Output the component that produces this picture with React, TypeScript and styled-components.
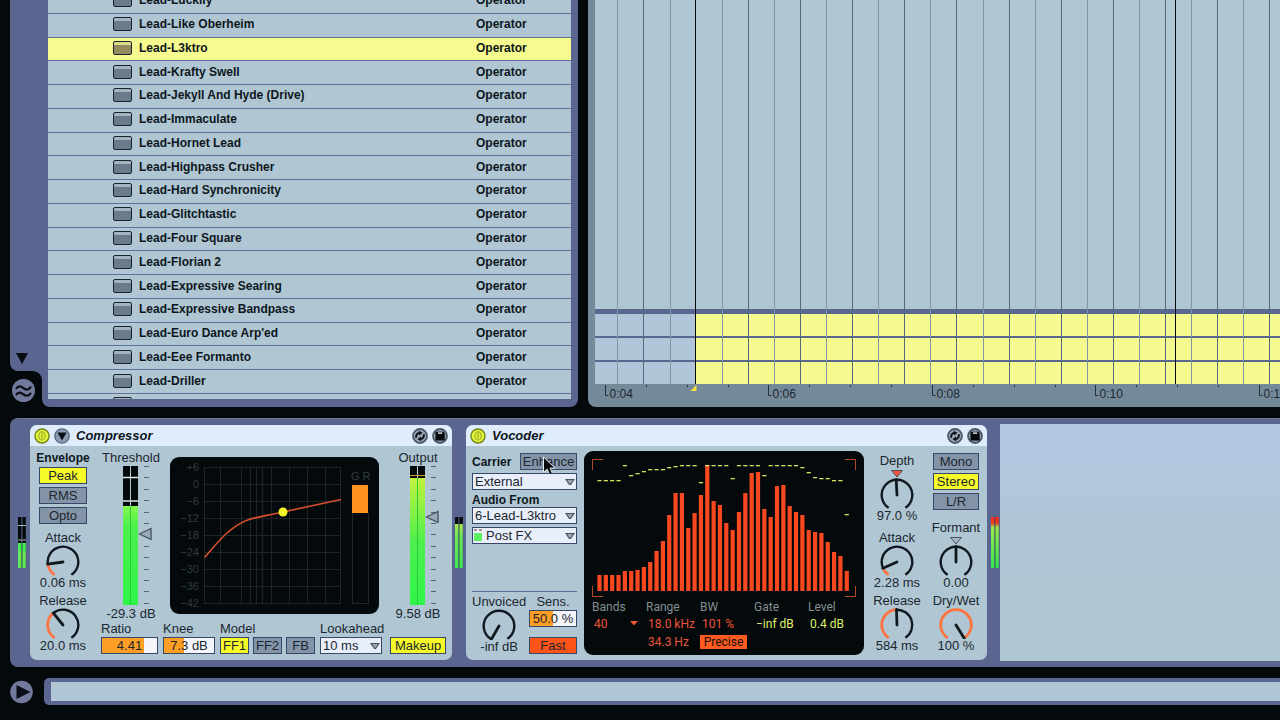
import React from "react";
import styled, { createGlobalStyle, css } from "styled-components";

const c = {
  black: "#04090b",
  frame: "#5a668f",
  pale: "#b0c6d2",
  paleBlue: "#b0c5d8",
  line: "#62719a",
  yellow: "#f7fa8e",
  lit: "#f6fb28",
  off: "#8494a8",
  ink: "#1b2630",
  orange: "#ff9e25",
  hot: "#ff5418",
  ring: "#ff7440",
};

const Global = createGlobalStyle`
  * { box-sizing: border-box; }
  html, body { margin: 0; background: ${c.black}; }
  body, button, input, select { font-family: "Liberation Sans", Arial, sans-serif; }
`;

const Page = styled.main`
  min-height: 100vh;
  display: grid;
  grid-template-rows: 1fr auto auto;
  gap: 11px;
  padding-bottom: 15px;
  background: ${c.black};
  color: ${c.ink};
  font-size: 13px;
  line-height: 14px;
  overflow: hidden;
`;

/* ---------- upper half ---------- */

const Upper = styled.div`
  display: flex;
  gap: 10px;
  padding-left: 10px;
  min-width: 0;
`;

const Browser = styled.section`
  display: flex;
  flex: 0 0 568px;
`;

const SideRail = styled.div`
  width: 32px;
  display: flex;
  flex-direction: column;
`;

const SideStrip = styled.div`
  flex: 1;
  display: flex;
  align-items: flex-end;
  background: ${c.frame};
  border-bottom-left-radius: 8px;
  padding: 0 0 7px 6px;
`;

const SideCorner = styled.div`
  background: ${c.frame};
`;

const SideFoot = styled.div`
  height: 36px;
  background: ${c.black};
  border-top-right-radius: 9px;
  display: flex;
  align-items: center;
  padding: 3px 0 0 1px;
`;

const PlainButton = styled.button`
  display: flex;
  padding: 0;
  border: 0;
  background: none;
  cursor: pointer;
`;

const BrowserPanel = styled.div`
  flex: 1;
  display: flex;
  padding: 0 7px 8px 6px;
  background: ${c.frame};
  border-radius: 0 0 8px 8px;
`;

const ListClip = styled.div`
  flex: 1;
  display: flex;
  overflow: hidden;
  background: ${c.pale};
`;

const Presets = styled.table`
  flex: 1;
  display: flex;
  margin-top: -10px;
  font-size: 12px;
  font-weight: bold;
  color: #0d161d;
`;

const PresetRows = styled.tbody`
  flex: 1;
  display: grid;
  grid-template-rows: repeat(17, minmax(23px, 1fr)) 5px;
`;

const PresetRow = styled.tr<{ $on?: boolean; $cut?: boolean }>`
  display: grid;
  grid-template-columns: 26px 337px 1fr;
  align-items: ${(p) => (p.$cut ? "start" : "center")};
  padding: ${(p) => (p.$cut ? "3px 0 0 65px" : "0 0 2px 65px")};
  overflow: hidden;
  background: ${(p) => (p.$on ? c.yellow : c.pale)};
  border-bottom: ${(p) => (p.$cut ? "0" : `1px solid ${c.line}`)};
`;

const Cell = styled.td`
  display: block;
  padding: 0;
  white-space: nowrap;
`;

const PresetIcon = styled.span<{ $on?: boolean }>`
  display: block;
  width: 19px;
  height: 14px;
  border: 1px solid #17222c;
  border-radius: 2px;
  background: ${(p) =>
    p.$on
      ? "linear-gradient(#d9dc84 0 3px, #948c60 3px)"
      : "linear-gradient(#a3b4c0 0 3px, #6a7c8b 3px)"};
`;

const Arrangement = styled.section`
  flex: 1;
  min-width: 0;
  display: flex;
  flex-direction: column;
  padding-left: 7px;
  background: #758a99;
  border-bottom-left-radius: 8px;
`;

const Tracks = styled.div`
  position: relative;
  flex: 1;
  display: flex;
  flex-direction: column;
  overflow: hidden;
`;

const OpenTrack = styled.div`
  flex: 1;
  background: ${c.pale};
  border-bottom: 5px solid ${c.frame};
`;

const Lane = styled.div`
  height: 22px;
  display: flex;
  background: ${c.paleBlue};

  & + & {
    height: 24px;
    border-top: 2px solid ${c.frame};
  }
`;

const LaneGap = styled.div`
  width: 100px;
`;

const LaneClip = styled.div`
  flex: 1;
  background: #f5fa90;
`;

const GridOverlay = styled.svg`
  position: absolute;
  inset: 0;
  width: 100%;
  height: 100%;
`;

const Ruler = styled.svg`
  display: block;
  width: 100%;
  height: 23px;
  font-size: 12px;
`;

/* ---------- device rail ---------- */

const Rail = styled.section`
  display: flex;
  margin-left: 10px;
  padding: 5px 0 6px;
  background: ${c.frame};
  border-top: 1px solid #6a769a;
  border-radius: 8px 0 0 8px;
  overflow: hidden;
`;

const RailGap = styled.div<{ $w: number; $inset?: number }>`
  flex: 0 0 ${(p) => p.$w}px;
  display: flex;
  align-items: center;
  justify-content: center;
  padding-left: ${(p) => p.$inset ?? 0}px;
`;

const DropZone = styled.div`
  flex: 1;
  background: linear-gradient(#b3c6e2, ${c.pale} 70%);
`;

const Device = styled.article<{ $w: number }>`
  flex: 0 0 ${(p) => p.$w}px;
  margin: 1px 0;
  border-radius: 7px;
  overflow: hidden;
  background: ${c.pale};
`;

const DeviceHeader = styled.header`
  height: 21px;
  display: flex;
  align-items: center;
  gap: 4px;
  padding: 0 4px;
  background: #dfecfb;
`;

const DeviceTitle = styled.h2`
  flex: 1;
  margin: 0 0 0 2px;
  font-size: 13px;
  line-height: 16px;
  font-style: italic;
  font-weight: bold;
  color: #0d161d;
`;

const DeviceBody = styled.div`
  display: flex;
  height: 214px;
`;

const Column = styled.div<{ $w?: number; $gap?: number; $top?: number }>`
  ${(p) => p.$w && css`flex: 0 0 ${p.$w}px;`}
  display: flex;
  flex-direction: column;
  align-items: center;
  gap: ${(p) => p.$gap ?? 0}px;
  padding-top: ${(p) => p.$top ?? 0}px;
`;

const Heading = styled.span`
  font-size: 12px;
  font-weight: bold;
  color: #0d161d;
`;

const Toggle = styled.button<{ $w: number; $tone?: "lit" | "hot" }>`
  width: ${(p) => p.$w}px;
  height: 17px;
  padding: 0;
  border: 1px solid #36476a;
  font-size: 13px;
  line-height: 14px;
  text-align: center;
  white-space: nowrap;
  color: ${c.ink};
  background: ${(p) => (p.$tone === "lit" ? c.lit : p.$tone === "hot" ? c.hot : c.off)};
`;

const ToggleStack = styled.div`
  display: flex;
  flex-direction: column;
  gap: 3px;
`;

const ToggleRow = styled.div`
  display: flex;
  gap: 4px;
`;

const KnobBox = styled.div`
  display: flex;
  flex-direction: column;
  align-items: center;
  white-space: nowrap;

  svg {
    display: block;
  }
`;

const Field = styled.label<{ $w?: number }>`
  display: flex;
  flex-direction: column;
  gap: 1px;
  white-space: nowrap;
  ${(p) => p.$w && css`width: ${p.$w}px;`}
`;

const FieldSet = styled.div`
  display: flex;
  flex-direction: column;
  gap: 1px;
`;

const ValueInput = styled.input`
  width: 100%;
  height: 17px;
  padding: 0;
  border: 1px solid #36476a;
  border-radius: 0;
  font-size: 13px;
  line-height: 14px;
  text-align: center;
  color: ${c.ink};
`;

const SelectBox = styled.span`
  position: relative;
  display: block;

  svg {
    position: absolute;
    pointer-events: none;
  }
`;

const Picker = styled.select<{ $indent?: number }>`
  appearance: none;
  display: block;
  width: 100%;
  height: 17px;
  padding: 0 0 0 ${(p) => p.$indent ?? 2}px;
  border: 1px solid #36476a;
  border-radius: 0;
  background: #e9effa;
  font-size: 13px;
  line-height: 14px;
  color: ${c.ink};
`;

const SelectArrow = styled.svg`
  right: 2px;
  top: 5px;
`;

const SourceLight = styled.svg`
  left: 2px;
  top: 2px;
`;

const Main = styled.div`
  flex: 1;
  display: flex;
  flex-direction: column;
  justify-content: space-between;
  padding: 5px 3px 6px 5px;
`;

const MeterRow = styled.div`
  display: flex;
  gap: 9px;
`;

const MeterColumn = styled.div`
  width: 60px;
  display: flex;
  flex-direction: column;
  align-items: center;
  white-space: nowrap;

  svg {
    display: block;
    margin: 1px 0 2px;
  }
`;

const Screen = styled.div`
  background: ${c.black};
  border-radius: 9px;
  overflow: hidden;
`;

const CurveScreen = styled(Screen)`
  width: 209px;
  height: 157px;
  margin-top: 6px;

  svg {
    display: block;
  }
`;

const ParamRow = styled.div`
  display: flex;
  align-items: flex-end;
  gap: 5px;
  padding-right: 3px;

  > :last-child {
    margin-left: auto;
  }
`;

const Sources = styled.div`
  width: 118px;
  display: flex;
  flex-direction: column;
  padding: 7px 7px 6px 6px;
`;

const CarrierRow = styled.div`
  display: flex;
  justify-content: space-between;
  align-items: center;
  margin-bottom: 3px;
`;

const SourceGroup = styled.div`
  display: flex;
  flex-direction: column;
  margin-top: 3px;

  > span + span + span {
    margin-top: 3px;
  }
`;

const VoiceRow = styled.div`
  display: flex;
  justify-content: space-between;
  margin-top: auto;
  border-top: 1px solid #60719a;
  padding-top: 3px;
`;

const VoiceColumn = styled.div`
  display: flex;
  flex-direction: column;
  align-items: center;
  justify-content: space-between;
`;

const BandScreen = styled(Screen)`
  width: 280px;
  height: 204px;
  margin-top: 5px;
  font-family: Roboto, "Liberation Sans", sans-serif;
  font-size: 12px;

  > svg {
    display: block;
  }
`;

const Readouts = styled.div`
  display: grid;
  grid-template-columns: repeat(5, 54px);
  grid-template-rows: 16px 17px 19px;
  align-items: center;
  padding-left: 8px;
  white-space: nowrap;
  color: #848f92;
`;

const Readout = styled.span<{ $tone?: "hot" | "lit" }>`
  padding-left: 2px;
  display: flex;
  align-items: center;
  gap: 22px;
  color: ${(p) => (p.$tone === "lit" ? "#dff06c" : "#ee5638")};
`;

const Precise = styled.button`
  width: 47px;
  height: 14px;
  padding: 0;
  border: 0;
  background: #ff5a20;
  font-family: inherit;
  font-size: 12px;
  line-height: 14px;
  color: #1a0d08;
`;

const Knobs = styled.div`
  display: flex;
  gap: 3px;
  padding-left: 5px;
`;

const MousePointer = styled.svg`
  position: absolute;
  left: 22px;
  top: 3px;
  pointer-events: none;
`;

const PointerHost = styled.span`
  position: relative;
  display: flex;
`;

/* ---------- status bar ---------- */

const StatusRow = styled.footer`
  display: flex;
  align-items: center;
  gap: 11px;
  padding-left: 10px;
`;

const StatusBar = styled.div`
  flex: 1;
  height: 27px;
  padding: 4px 0 4px 7px;
  background: ${c.frame};
  border-radius: 5px 0 0 5px;
`;

const StatusText = styled.div`
  height: 100%;
  background: #b1c6d4;
`;

/* ---------- drawings ---------- */

const at = (cx: number, cy: number, r: number, deg: number) => {
  const a = (deg * Math.PI) / 180;
  return `${(cx + r * Math.sin(a)).toFixed(2)} ${(cy - r * Math.cos(a)).toFixed(2)}`;
};

const arc = (cx: number, cy: number, r: number, from: number, to: number) =>
  `M${at(cx, cy, r, from)} A${r} ${r} 0 ${to - from > 180 ? 1 : 0} 1 ${at(cx, cy, r, to)}`;

type KnobProps = { label: string; value: string; angle: number; filled?: boolean; marker?: string };

function Knob({ label, value, angle, filled, marker }: KnobProps) {
  const h = marker ? 41 : 31;
  const cy = h - 14;
  const end = Math.min(angle, 147);
  return (
    <KnobBox role="slider" aria-label={label} aria-valuetext={value} aria-valuenow={angle}>
      <span>{label}</span>
      <svg width="38" height={h} fill="none" strokeWidth="2.4">
        {marker && (
          <path d="M13.5 2.5h11L19 9z" fill={marker} stroke="#46545f" strokeWidth="1" />
        )}
        <path d={arc(19, cy, 15.3, filled ? end : -147, 147)} stroke="#10191f" />
        {filled && <path d={arc(19, cy, 15.3, -147, end)} stroke={c.ring} strokeWidth="2.8" />}
        <path
          d={`M19 ${cy}L${at(19, cy, 15.5, angle)}`}
          stroke="#10191f"
          strokeWidth="2.8"
          strokeLinecap="round"
        />
      </svg>
      <span>{value}</span>
    </KnobBox>
  );
}

function LevelMeter({ kind, top, handle }: { kind: "in" | "out"; top: number; handle: number }) {
  const id = `level-${kind}`;
  return (
    <svg width="60" height="139">
      <defs>
        <linearGradient id={id} x1="0" y1="0" x2="0" y2="1">
          <stop offset="0" stopColor={kind === "out" ? "#c2f23c" : "#84f84c"} />
          <stop offset={kind === "out" ? "0.5" : "0.2"} stopColor="#4df04c" />
          <stop offset="1" stopColor="#2ff548" />
        </linearGradient>
      </defs>
      <path d="M22 0h7v139h-7zM30 0h7v139h-7z" fill={c.black} />
      <rect x="22" y={top} width="15" height={139 - top} fill={`url(#${id})`} />
      <path d={`M29.5 ${top}V139`} stroke="#2cc940" strokeWidth="1" />
      {kind === "in" ? (
        <path d="M22 11.5h15M22 35h15" stroke="#dfe8ea" strokeWidth="1.5" />
      ) : (
        <path d="M22 9.5h15" stroke="#d6a028" strokeWidth="1.2" />
      )}
      {Array.from({ length: 13 }, (_, i) => (
        <path key={i} d={`M43 ${0.5 + Math.round(i * 11.4)}h5`} stroke="#56646f" />
      ))}
      <path
        d={`M38.5 ${handle}L50 ${handle - 5.5}v11z`}
        fill="#9aabb8"
        stroke="#44525d"
        strokeWidth="1.3"
      />
    </svg>
  );
}

function TinyMeter({ kind }: { kind: "low" | "mid" | "hot" }) {
  const top = kind === "low" ? 26 : kind === "mid" ? 7 : 0;
  const id = `tiny-${kind}`;
  return (
    <svg width="8" height="51">
      <defs>
        <linearGradient id={id} x1="0" y1="0" x2="0" y2="1">
          <stop offset="0" stopColor={kind === "hot" ? "#ff2a18" : kind === "mid" ? "#a8e84c" : "#3ef050"} />
          <stop offset="0.12" stopColor={kind === "hot" ? "#f04028" : kind === "mid" ? "#90e850" : "#3ef050"} />
          <stop offset="0.2" stopColor={kind === "hot" ? "#9ae850" : "#70e858"} />
          <stop offset="1" stopColor="#34e858" />
        </linearGradient>
      </defs>
      <path d="M0 0h3.4v51H0zM4.4 0h3.4v51H4.4z" fill={c.black} />
      <path d={`M0 ${top}h3.4v51H0zM4.4 ${top}h3.4v51H4.4z`} fill={`url(#${id})`} />
      {kind === "low" && <path d="M0 8.5h8M0 23h8" stroke="#9db8b0" />}
    </svg>
  );
}

const PowerIcon = () => (
  <svg width="16" height="16" fill="none">
    <circle cx="8" cy="8" r="7" fill="#e6f53a" stroke="#6f8a1e" strokeWidth="1.5" />
    <ellipse cx="8" cy="8" rx="3.2" ry="4.2" stroke="#a2b428" strokeWidth="1.3" />
    <path d="M8 5.5v5" stroke="#8ea024" strokeWidth="1.3" />
  </svg>
);

const FoldIcon = () => (
  <svg width="16" height="16">
    <circle cx="8" cy="8" r="7.2" fill="#8b9bb4" stroke="#56667c" strokeWidth="1.3" />
    <path d="M3.4 4.6h9.2L8 12.6z" fill="#0a1016" />
  </svg>
);

const SwapIcon = () => (
  <svg width="16" height="16" fill="none">
    <circle cx="8" cy="8" r="7" fill="#98a6b6" stroke="#4c5966" strokeWidth="1.8" />
    <path d="M4.300 9.800C3.600 7.400 5 5.400 7 4.900M11.700 6.200c.7 2.400-.7 4.400-2.700 4.900" stroke="#0a1016" strokeWidth="2" />
    <path d="M6.800 2.800l3.700 2-3.300 2.700zM9.200 13.200l-3.700-2 3.300-2.700z" fill="#0a1016" />
  </svg>
);

const DiskIcon = () => (
  <svg width="16" height="16">
    <circle cx="8" cy="8" r="7" fill="#8d9bab" stroke="#4c5966" strokeWidth="1.8" />
    <path d="M3.500 3.800h8l1.200 1.200v7.500H3.500z" fill="#05090c" />
    <path d="M6 4.200h4.200v1.800H6z" fill="#b8c5d2" />
  </svg>
);

const WaveIcon = () => (
  <svg width="25" height="25" fill="none">
    <circle cx="12.5" cy="12.5" r="11.5" fill="#717a9d" />
    <path
      d="M5 10.800c2.500-3.600 5-2.600 7.500-.6s5 2 7.500-1.600M5 17c2.500-3.600 5-2.600 7.500-.6s5 2 7.500-1.600"
      stroke="#0a0f18"
      strokeWidth="2.2"
    />
  </svg>
);

const PlayIcon = () => (
  <svg width="23" height="24">
    <circle cx="11.5" cy="12" r="11.300" fill="#717a9d" />
    <path d="M6.500 5v14l14-7z" fill="#0a0f18" />
  </svg>
);

const DropArrow = () => (
  <SelectArrow width="10" height="8">
    <path d="M1 1.500h8L5.600 6.500H4.400z" fill="#98a6b0" stroke="#46525c" strokeWidth="1.2" />
  </SelectArrow>
);

function TimeGrid() {
  const lines = Array.from({ length: 80 }, (_, i) => Math.round(22.4 + i * 26.08) + 0.5);
  return (
    <GridOverlay aria-hidden="true">
      {lines.map((x, i) =>
        i === 3 ? null : (
          <line key={x} x1={x} x2={x} y1="0" y2="100%" stroke={i % 2 ? "#55677c" : "#8196a8"} />
        )
      )}
      <line x1="100.500" x2="100.500" y1="0" y2="100%" stroke="#05090c" />
      <line x1="580.500" x2="580.500" y1="0" y2="100%" stroke="#05090c" />
    </GridOverlay>
  );
}

function TimeRuler() {
  const marks = ["0:04", "0:06", "0:08", "0:10", "0:12", "0:14", "0:16", "0:18"];
  return (
    <Ruler>
      {marks.map((m, i) => {
        const x = Math.round(10 + i * 163.4) + 0.5;
        return (
          <g key={m} fill="none" stroke="#24313c">
            <path d={`M${x} 1v10.500h3`} />
            <path d={`M${x + 41} 1v2M${x + 82} 1v2M${x + 123} 1v2`} />
            <text x={x + 4} y="14" fill="#1b2731" stroke="none">
              {m}
            </text>
          </g>
        );
      })}
      <path d="M95.500 7h6V1z" fill="#f8e23a" />
    </Ruler>
  );
}

function CurveGraph() {
  const db = ["+6", "0", "−6", "−12", "−18", "−24", "−30", "−36", "−42"];
  const cols = [34, 50, 71, 80, 86, 92, 101, 119, 137, 155, 170];
  return (
    <svg width="209" height="157" fill="none" fontSize="11">
      {db.map((t, i) => (
        <g key={t}>
          <text x="29" y={14 + Math.round(i * 17)} textAnchor="end" fill="#303a3d">
            {t}
          </text>
          <path d={`M34 ${10.5 + Math.round(i * 17)}h137`} stroke="#1e2527" />
        </g>
      ))}
      {cols.map((x) => (
        <path key={x} d={`M${x + 0.5} 10v136`} stroke="#1e2527" />
      ))}
      <path d="M182.500 56v90M198.500 56v90M182 146.500h17" stroke="#20282a" />
      <text x="181" y="23" fill="#343e41">
        G R
      </text>
      <rect x="182" y="28" width="16" height="28" fill="#ff9420" />
      <path d="M34.500 100.500C47 86 60 69 79 62.500C88 59.500 98 58.500 113 55L171 42.500" stroke="#d8502c" strokeWidth="1.600" />
      <circle cx="113" cy="55" r="4.500" fill="#f6f52a" />
    </svg>
  );
}

const bands = [
  16, 16, 16, 16, 20, 20, 21, 24, 29, 40, 50, 76, 98, 98, 63, 78, 96, 126, 90, 86, 68, 61, 79, 98,
  118, 119, 82, 74, 105, 106, 85, 79, 76, 61, 59, 58, 49, 39, 35, 20,
];

const peaks = [
  110, 110, 110, 110, 125, 115, 117, 119, 121, 121, 121, 123, 124, 125, 125, 125, 108, 125, 125, 125,
  125, 112, 125, 125, 125, 125, 115, 125, 125, 125, 125, 125, 123, 118, 113, 112, 112, 110, 110, 76,
];

function BandGraph() {
  return (
    <svg width="280" height="148" fill="none">
      <path d="M8.500 19V8.500H19M261 8.500h10.500V19M8.500 135v10.500H19M261 145.500h10.500V135" stroke="#b4492f" />
      {bands.map((h, i) => {
        const x = 13.4 + i * 6.34;
        return (
          <g key={i}>
            <rect x={x} y={140 - h} width="4.200" height={h} fill="#f9481f" />
            <rect x={x} y={139 - peaks[i]} width="4.200" height="1.300" fill="#d6e05c" />
          </g>
        );
      })}
    </svg>
  );
}

/* ---------- data ---------- */

const presets = [
  "Lead-Luckily",
  "Lead-Like Oberheim",
  "Lead-L3ktro",
  "Lead-Krafty Swell",
  "Lead-Jekyll And Hyde (Drive)",
  "Lead-Immaculate",
  "Lead-Hornet Lead",
  "Lead-Highpass Crusher",
  "Lead-Hard Synchronicity",
  "Lead-Glitchtastic",
  "Lead-Four Square",
  "Lead-Florian 2",
  "Lead-Expressive Searing",
  "Lead-Expressive Bandpass",
  "Lead-Euro Dance Arp'ed",
  "Lead-Eee Formanto",
  "Lead-Driller",
];

const fill = (pct: number) => ({
  background: `linear-gradient(90deg, ${c.orange} ${pct}%, #f3f5fb ${pct}%)`,
});

function Compressor() {
  return (
    <Device $w={422}>
      <DeviceHeader>
        <PlainButton aria-label="Compressor on"><PowerIcon /></PlainButton>
        <PlainButton aria-label="Fold"><FoldIcon /></PlainButton>
        <DeviceTitle>Compressor</DeviceTitle>
        <PlainButton aria-label="Hot-swap preset"><SwapIcon /></PlainButton>
        <PlainButton aria-label="Save preset"><DiskIcon /></PlainButton>
      </DeviceHeader>
      <DeviceBody>
        <Column $w={66} $top={5} $gap={4}>
          <Column $gap={2}>
            <Heading>Envelope</Heading>
            <ToggleStack>
              <Toggle $w={48} $tone="lit">Peak</Toggle>
              <Toggle $w={48}>RMS</Toggle>
              <Toggle $w={48}>Opto</Toggle>
            </ToggleStack>
          </Column>
          <Column $top={3} $gap={4}>
            <Knob label="Attack" value="0.06 ms" angle={-98} filled />
            <Knob label="Release" value="20.0 ms" angle={-39} filled />
          </Column>
        </Column>
        <Main>
          <MeterRow>
            <MeterColumn>
              <span>Threshold</span>
              <LevelMeter kind="in" top={40} handle={68} />
              <span>-29.3 dB</span>
            </MeterColumn>
            <CurveScreen><CurveGraph /></CurveScreen>
            <MeterColumn>
              <span>Output</span>
              <LevelMeter kind="out" top={12} handle={51} />
              <span>9.58 dB</span>
            </MeterColumn>
          </MeterRow>
          <ParamRow>
            <Field $w={57}>Ratio<ValueInput defaultValue="4.41" style={fill(76)} /></Field>
            <Field $w={52}>Knee<ValueInput defaultValue="7.3 dB" style={fill(40)} /></Field>
            <FieldSet>
              <span>Model</span>
              <ToggleRow>
                <Toggle $w={29} $tone="lit">FF1</Toggle>
                <Toggle $w={29}>FF2</Toggle>
                <Toggle $w={29}>FB</Toggle>
              </ToggleRow>
            </FieldSet>
            <Field $w={62}>
              Lookahead
              <SelectBox>
                <Picker><option>10 ms</option></Picker>
                <DropArrow />
              </SelectBox>
            </Field>
            <Toggle $w={56} $tone="lit">Makeup</Toggle>
          </ParamRow>
        </Main>
      </DeviceBody>
    </Device>
  );
}

function Vocoder() {
  return (
    <Device $w={521}>
      <DeviceHeader>
        <PlainButton aria-label="Vocoder on"><PowerIcon /></PlainButton>
        <DeviceTitle>Vocoder</DeviceTitle>
        <PlainButton aria-label="Hot-swap preset"><SwapIcon /></PlainButton>
        <PlainButton aria-label="Save preset"><DiskIcon /></PlainButton>
      </DeviceHeader>
      <DeviceBody>
        <Sources>
          <CarrierRow>
            <Heading>Carrier</Heading>
            <PointerHost>
              <Toggle $w={57}>Enhance</Toggle>
              <MousePointer width="15" height="22">
                <path
                  d="M1.500 1v15.500l3.700-3.400 2.700 6.400 2.900-1.200-2.700-6.200h5z"
                  fill="#05090c"
                  stroke="#e4ecf2"
                  strokeWidth="1"
                />
              </MousePointer>
            </PointerHost>
          </CarrierRow>
          <SelectBox>
            <Picker aria-label="Carrier"><option>External</option></Picker>
            <DropArrow />
          </SelectBox>
          <SourceGroup>
            <Heading>Audio From</Heading>
            <SelectBox>
              <Picker aria-label="Audio from"><option>6-Lead-L3ktro</option></Picker>
              <DropArrow />
            </SelectBox>
            <SelectBox>
              <Picker aria-label="Tap point" $indent={13}><option>Post FX</option></Picker>
              <SourceLight width="8" height="12">
                <path d="M0 4h8v8H0z" fill="#5ef060" />
                <path d="M0 1h3M5 1h3" stroke="#7a2a20" />
              </SourceLight>
              <DropArrow />
            </SelectBox>
          </SourceGroup>
          <VoiceRow>
            <Knob label="Unvoiced" value="-inf dB" angle={-150} />
            <VoiceColumn>
              <Field $w={48}>
                <Column>Sens.</Column>
                <ValueInput defaultValue="50.0 %" style={fill(50)} />
              </Field>
              <Toggle $w={48} $tone="hot">Fast</Toggle>
            </VoiceColumn>
          </VoiceRow>
        </Sources>
        <BandScreen>
          <BandGraph />
          <Readouts>
            <span>Bands</span>
            <span>Range</span>
            <span>BW</span>
            <span>Gate</span>
            <span>Level</span>
            <Readout>
              40
              <svg width="8" height="5"><path d="M0 0h8L4 4.500z" fill="#ee5638" /></svg>
            </Readout>
            <Readout>18.0 kHz</Readout>
            <Readout>101 %</Readout>
            <Readout $tone="lit">−inf dB</Readout>
            <Readout $tone="lit">0.4 dB</Readout>
            <span />
            <Readout>34.3 Hz</Readout>
            <Precise>Precise</Precise>
          </Readouts>
        </BandScreen>
        <Knobs>
          <Column $w={56} $top={8}>
            <Knob label="Depth" value="97.0 %" angle={-3} marker="#f0553c" />
            <Column $top={8} $gap={4}>
              <Knob label="Attack" value="2.28 ms" angle={-114} filled />
              <Knob label="Release" value="584 ms" angle={-2} filled />
            </Column>
          </Column>
          <Column $w={56} $top={7} $gap={11}>
            <ToggleStack>
              <Toggle $w={46}>Mono</Toggle>
              <Toggle $w={46} $tone="lit">Stereo</Toggle>
              <Toggle $w={46}>L/R</Toggle>
            </ToggleStack>
            <Column $gap={4}>
              <Knob label="Formant" value="0.00" angle={0} marker="#a6b6c4" />
              <Knob label="Dry/Wet" value="100 %" angle={148} filled />
            </Column>
          </Column>
        </Knobs>
      </DeviceBody>
    </Device>
  );
}

export default function App() {
  return (
    <>
      <Global />
      <Page>
        <Upper>
          <Browser>
            <SideRail>
              <SideStrip>
                <PlainButton aria-label="Scroll down">
                  <svg width="12" height="11"><path d="M0 0h12L6 11z" fill="#080d14" /></svg>
                </PlainButton>
              </SideStrip>
              <SideCorner>
                <SideFoot>
                  <PlainButton aria-label="Groove pool"><WaveIcon /></PlainButton>
                </SideFoot>
              </SideCorner>
            </SideRail>
            <BrowserPanel>
              <ListClip>
                <Presets>
                  <PresetRows>
                    {presets.map((name, i) => (
                      <PresetRow key={name} $on={i === 2}>
                        <Cell><PresetIcon $on={i === 2} /></Cell>
                        <Cell>{name}</Cell>
                        <Cell>Operator</Cell>
                      </PresetRow>
                    ))}
                    <PresetRow $cut>
                      <Cell><PresetIcon /></Cell>
                    </PresetRow>
                  </PresetRows>
                </Presets>
              </ListClip>
            </BrowserPanel>
          </Browser>
          <Arrangement>
            <Tracks>
              <OpenTrack />
              <Lane><LaneGap /><LaneClip /></Lane>
              <Lane><LaneGap /><LaneClip /></Lane>
              <Lane><LaneGap /><LaneClip /></Lane>
              <TimeGrid />
            </Tracks>
            <TimeRuler />
          </Arrangement>
        </Upper>
        <Rail>
          <RailGap $w={20} $inset={4}><TinyMeter kind="low" /></RailGap>
          <Compressor />
          <RailGap $w={14}><TinyMeter kind="mid" /></RailGap>
          <Vocoder />
          <RailGap $w={13} $inset={2}><TinyMeter kind="hot" /></RailGap>
          <DropZone />
        </Rail>
        <StatusRow>
          <PlainButton aria-label="Preview"><PlayIcon /></PlainButton>
          <StatusBar><StatusText /></StatusBar>
        </StatusRow>
      </Page>
    </>
  );
}
